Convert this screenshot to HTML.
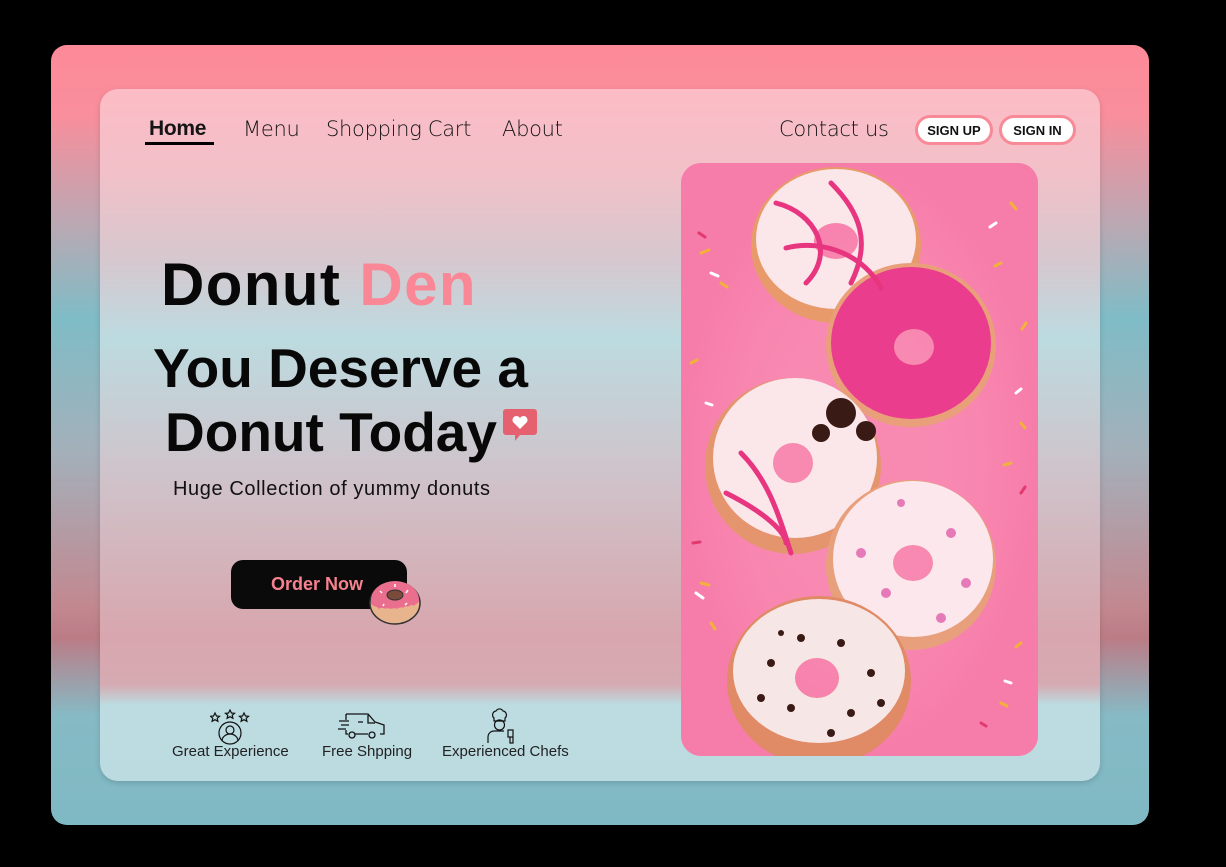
<!DOCTYPE html>
<html><head><meta charset="utf-8"><style>
*{margin:0;padding:0;box-sizing:border-box}
body{width:1226px;height:867px;background:#000;position:relative;overflow:hidden;font-family:"Liberation Sans",sans-serif}
.outer{position:absolute;left:51px;top:45px;width:1098px;height:780px;border-radius:16px;
background:linear-gradient(180deg,#fd8a98 0%,#f98e9c 9%,#b5aab4 24%,#7fbcc6 35%,#a3b0ba 52%,#c28890 72%,#bb7c86 76%,#86bac5 86%,#7fb9c4 100%)}
.inner{position:absolute;left:100px;top:89px;width:1000px;height:692px;border-radius:18px;
background:linear-gradient(180deg,#fdbcc6 0%,#f2c0c8 12%,#d6c8cf 25%,#bcdbe0 36%,#cfc4cb 55%,#d8a6ae 79%,#d6aab2 86%,#bcdce1 89%,#bcdbe0 100%);
box-shadow:0 2px 6px rgba(0,0,0,.15)}
.nav{position:absolute;top:117px;font-size:21px;color:#151515;font-family:"DejaVu Sans","Liberation Sans",sans-serif;font-weight:300;letter-spacing:-0.3px}
.btn{position:absolute;top:115px;height:30px;border:3px solid #f88a98;border-radius:15px;background:#fff;font-size:13px;font-weight:bold;display:flex;align-items:center;justify-content:center;color:#111}
h1{position:absolute;font-weight:bold;color:#080808}
.feat{position:absolute;top:743px;font-size:15px;color:#222}
</style></head><body>
<div class="outer"></div>
<div class="inner"></div>
<div class="nav" style="left:149px;font-weight:bold;font-family:'Liberation Sans',sans-serif">Home</div>
<div style="position:absolute;left:145px;top:142px;width:69px;height:3px;background:#000"></div>
<div class="nav" style="left:243px">Menu</div>
<div class="nav" style="left:326px">Shopping Cart</div>
<div class="nav" style="left:502px">About</div>
<div class="nav" style="left:779px">Contact us</div>
<div class="btn" style="left:915px;width:78px">SIGN UP</div>
<div class="btn" style="left:999px;width:77px">SIGN IN</div>

<h1 style="left:161px;top:250px;font-size:60px;letter-spacing:1.4px">Donut <span style="color:#f98796">Den</span></h1>
<h1 style="left:153px;top:336px;font-size:55px">You Deserve a</h1>
<h1 style="left:165px;top:400px;font-size:55px">Donut Today</h1>
<svg style="position:absolute;left:502px;top:407px" width="36" height="36" viewBox="0 0 36 36"><path d="M4 2h28a3 3 0 0 1 3 3v20a3 3 0 0 1-3 3H18l-5 6v-6H4a3 3 0 0 1-3-3V5a3 3 0 0 1 3-3z" fill="#e5616f"/><path d="M18 22l-7-7a3.5 3.5 0 0 1 7-4 3.5 3.5 0 0 1 7 4z" fill="#fff"/></svg>
<div style="position:absolute;left:173px;top:478px;font-size:20px;letter-spacing:0.6px;color:#111">Huge Collection of yummy donuts</div>

<div style="position:absolute;left:231px;top:560px;width:176px;height:49px;background:#0a0a0a;border-radius:12px;color:#f7828f;font-weight:bold;font-size:18px;padding:14px 0 0 40px">Order Now</div>
<svg style="position:absolute;left:368px;top:578px" width="54" height="48" viewBox="0 0 54 48"><ellipse cx="27" cy="25" rx="25" ry="21" fill="#e8b48e" stroke="#333" stroke-width="1.5"/><path d="M3 22a24 19 0 0 1 48 0c0 4-3 3-5 6-3-3-5 2-8 0-3 3-6 0-9 3-3-2-6 1-9-1-3 2-6-2-9 1-2-3-5-2-8-5z" fill="#ea6f8f"/><ellipse cx="27" cy="17" rx="8" ry="5" fill="#7a4a3a" stroke="#333"/><g stroke="#fff" stroke-width="1.5"><path d="M12 13l2 2M40 12l-2 3M15 28l1-2M37 27l2-2M27 6v3"/></g></svg>

<svg style="position:absolute;left:210px;top:709px" width="40" height="36" viewBox="0 0 40 36" fill="none" stroke="#111" stroke-width="1.2"><path d="M5 4l1.5 3 3 .3-2.3 2 .7 3-2.9-1.6-2.9 1.6.7-3L.5 7.3l3-.3z"/><path d="M20 1l1.5 3 3 .3-2.3 2 .7 3L20 7.7l-2.9 1.6.7-3-2.3-2 3-.3z"/><path d="M34 4l1.5 3 3 .3-2.3 2 .7 3-2.9-1.6-2.9 1.6.7-3-2.3-2 3-.3z"/><circle cx="20" cy="24" r="11"/><circle cx="20" cy="21" r="4"/><path d="M12 32a8 7 0 0 1 16 0"/></svg>
<svg style="position:absolute;left:338px;top:712px" width="48" height="28" viewBox="0 0 48 28" fill="none" stroke="#111" stroke-width="1.3"><path d="M8 2h22l7 8 9 3v9h-4M30 22H17M10 22H8v-4M8 2v6"/><path d="M30 3v8h7"/><circle cx="14" cy="23" r="3"/><circle cx="34" cy="23" r="3"/><path d="M1 9h10M3 13h8M0 17h8M20 10h5"/></svg>
<svg style="position:absolute;left:484px;top:708px" width="34" height="36" viewBox="0 0 34 36" fill="none" stroke="#111" stroke-width="1.2"><path d="M10 10a4 4 0 0 1 2-7 4 4 0 0 1 7 0 4 4 0 0 1 2 7v3H10z"/><circle cx="15.5" cy="17" r="5"/><path d="M4 35v-6a6 6 0 0 1 6-6h10M24 22h5v7h-5zM26 29v6h3v-6"/></svg>
<div class="feat" style="left:172px">Great Experience</div>
<div class="feat" style="left:322px">Free Shpping</div>
<div class="feat" style="left:442px">Experienced Chefs</div>

<svg style="position:absolute;left:681px;top:163px;border-radius:20px" width="357" height="593" viewBox="0 0 357 593">
<rect width="357" height="593" fill="#f88ab2"/>
<defs><radialGradient id="g" cx=".5" cy=".5" r=".5"><stop offset=".3" stop-opacity="0" stop-color="#f88ab2"/><stop offset="1" stop-color="#f56ea0"/></radialGradient></defs>
<rect width="357" height="593" fill="url(#g)" opacity=".5"/>
<g fill-rule="evenodd">
<path d="M155 82m-85 0a85 78 0 1 0 170 0a85 78 0 1 0-170 0zM155 78m-22 0a22 18 0 1 0 44 0a22 18 0 1 0-44 0z" fill="#e89a6a"/>
<path d="M155 76m-80 0a80 70 0 1 0 160 0a80 70 0 1 0-160 0zM155 78m-22 0a22 18 0 1 0 44 0a22 18 0 1 0-44 0z" fill="#fbe6ea"/>
<path d="M230 182m-85 0a85 82 0 1 0 170 0a85 82 0 1 0-170 0zM233 184m-20 0a20 18 0 1 0 40 0a20 18 0 1 0-40 0z" fill="#e9a07a"/>
<path d="M230 180m-80 0a80 76 0 1 0 160 0a80 76 0 1 0-160 0zM233 184m-20 0a20 18 0 1 0 40 0a20 18 0 1 0-40 0z" fill="#ea3d8d"/>
<path d="M112 303m-88 0a88 88 0 1 0 176 0a88 88 0 1 0-176 0zM112 300m-20 0a20 20 0 1 0 40 0a20 20 0 1 0-40 0z" fill="#e4956e"/>
<path d="M114 295m-82 0a82 80 0 1 0 164 0a82 80 0 1 0-164 0zM112 300m-20 0a20 20 0 1 0 40 0a20 20 0 1 0-40 0z" fill="#fbe6ea"/>
<path d="M230 402m-85 0a85 85 0 1 0 170 0a85 85 0 1 0-170 0zM232 400m-20 0a20 18 0 1 0 40 0a20 18 0 1 0-40 0z" fill="#e8a07c"/>
<path d="M232 396m-80 0a80 78 0 1 0 160 0a80 78 0 1 0-160 0zM232 400m-20 0a20 18 0 1 0 40 0a20 18 0 1 0-40 0z" fill="#fce8ec"/>
<path d="M138 518m-92 0a92 85 0 1 0 184 0a92 85 0 1 0-184 0zM136 515m-22 0a22 20 0 1 0 44 0a22 20 0 1 0-44 0z" fill="#e08a66"/>
<path d="M138 508m-86 0a86 72 0 1 0 172 0a86 72 0 1 0-172 0zM136 515m-22 0a22 20 0 1 0 44 0a22 20 0 1 0-44 0z" fill="#f7e6e6"/>
</g>
<g fill="none" stroke="#e8357f" stroke-width="5" stroke-linecap="round"><path d="M95 40c40 10 60 50 30 80M150 20c30 30 40 60 20 100M105 85c40-10 80 10 95 40M60 290c30 30 40 70 50 100M45 330c40 20 60 40 60 50"/></g>
<g fill="#3a1a14"><circle cx="160" cy="250" r="15"/><circle cx="140" cy="270" r="9"/><circle cx="185" cy="268" r="10"/></g>
<g fill="#3a1a14"><circle cx="90" cy="500" r="4"/><circle cx="120" cy="475" r="4"/><circle cx="160" cy="480" r="4"/><circle cx="190" cy="510" r="4"/><circle cx="110" cy="545" r="4"/><circle cx="170" cy="550" r="4"/><circle cx="80" cy="535" r="4"/><circle cx="150" cy="570" r="4"/><circle cx="200" cy="540" r="4"/><circle cx="100" cy="470" r="3"/></g>
<g fill="#e67ab8"><circle cx="180" cy="390" r="5"/><circle cx="205" cy="430" r="5"/><circle cx="270" cy="370" r="5"/><circle cx="285" cy="420" r="5"/><circle cx="260" cy="455" r="5"/><circle cx="220" cy="340" r="4"/></g>
<g stroke-width="3" stroke-linecap="round"><path d="M20 90l8-3M40 120l6 4M330 40l5 6M320 100l-6 3M340 260l4 5M330 300l-7 2M20 420l8 2M30 460l4 6M340 480l-5 4M320 540l6 3M10 200l6-3M345 160l-4 6" stroke="#f2b13a"/><path d="M30 110l7 3M315 60l-6 4M335 230l5-4M15 430l7 5M330 520l-6-2M25 240l6 2" stroke="#fff"/><path d="M18 70l6 4M340 330l4-6M12 380l7-1M300 560l5 3" stroke="#e23a6f"/></g>
</svg>
</body></html>
